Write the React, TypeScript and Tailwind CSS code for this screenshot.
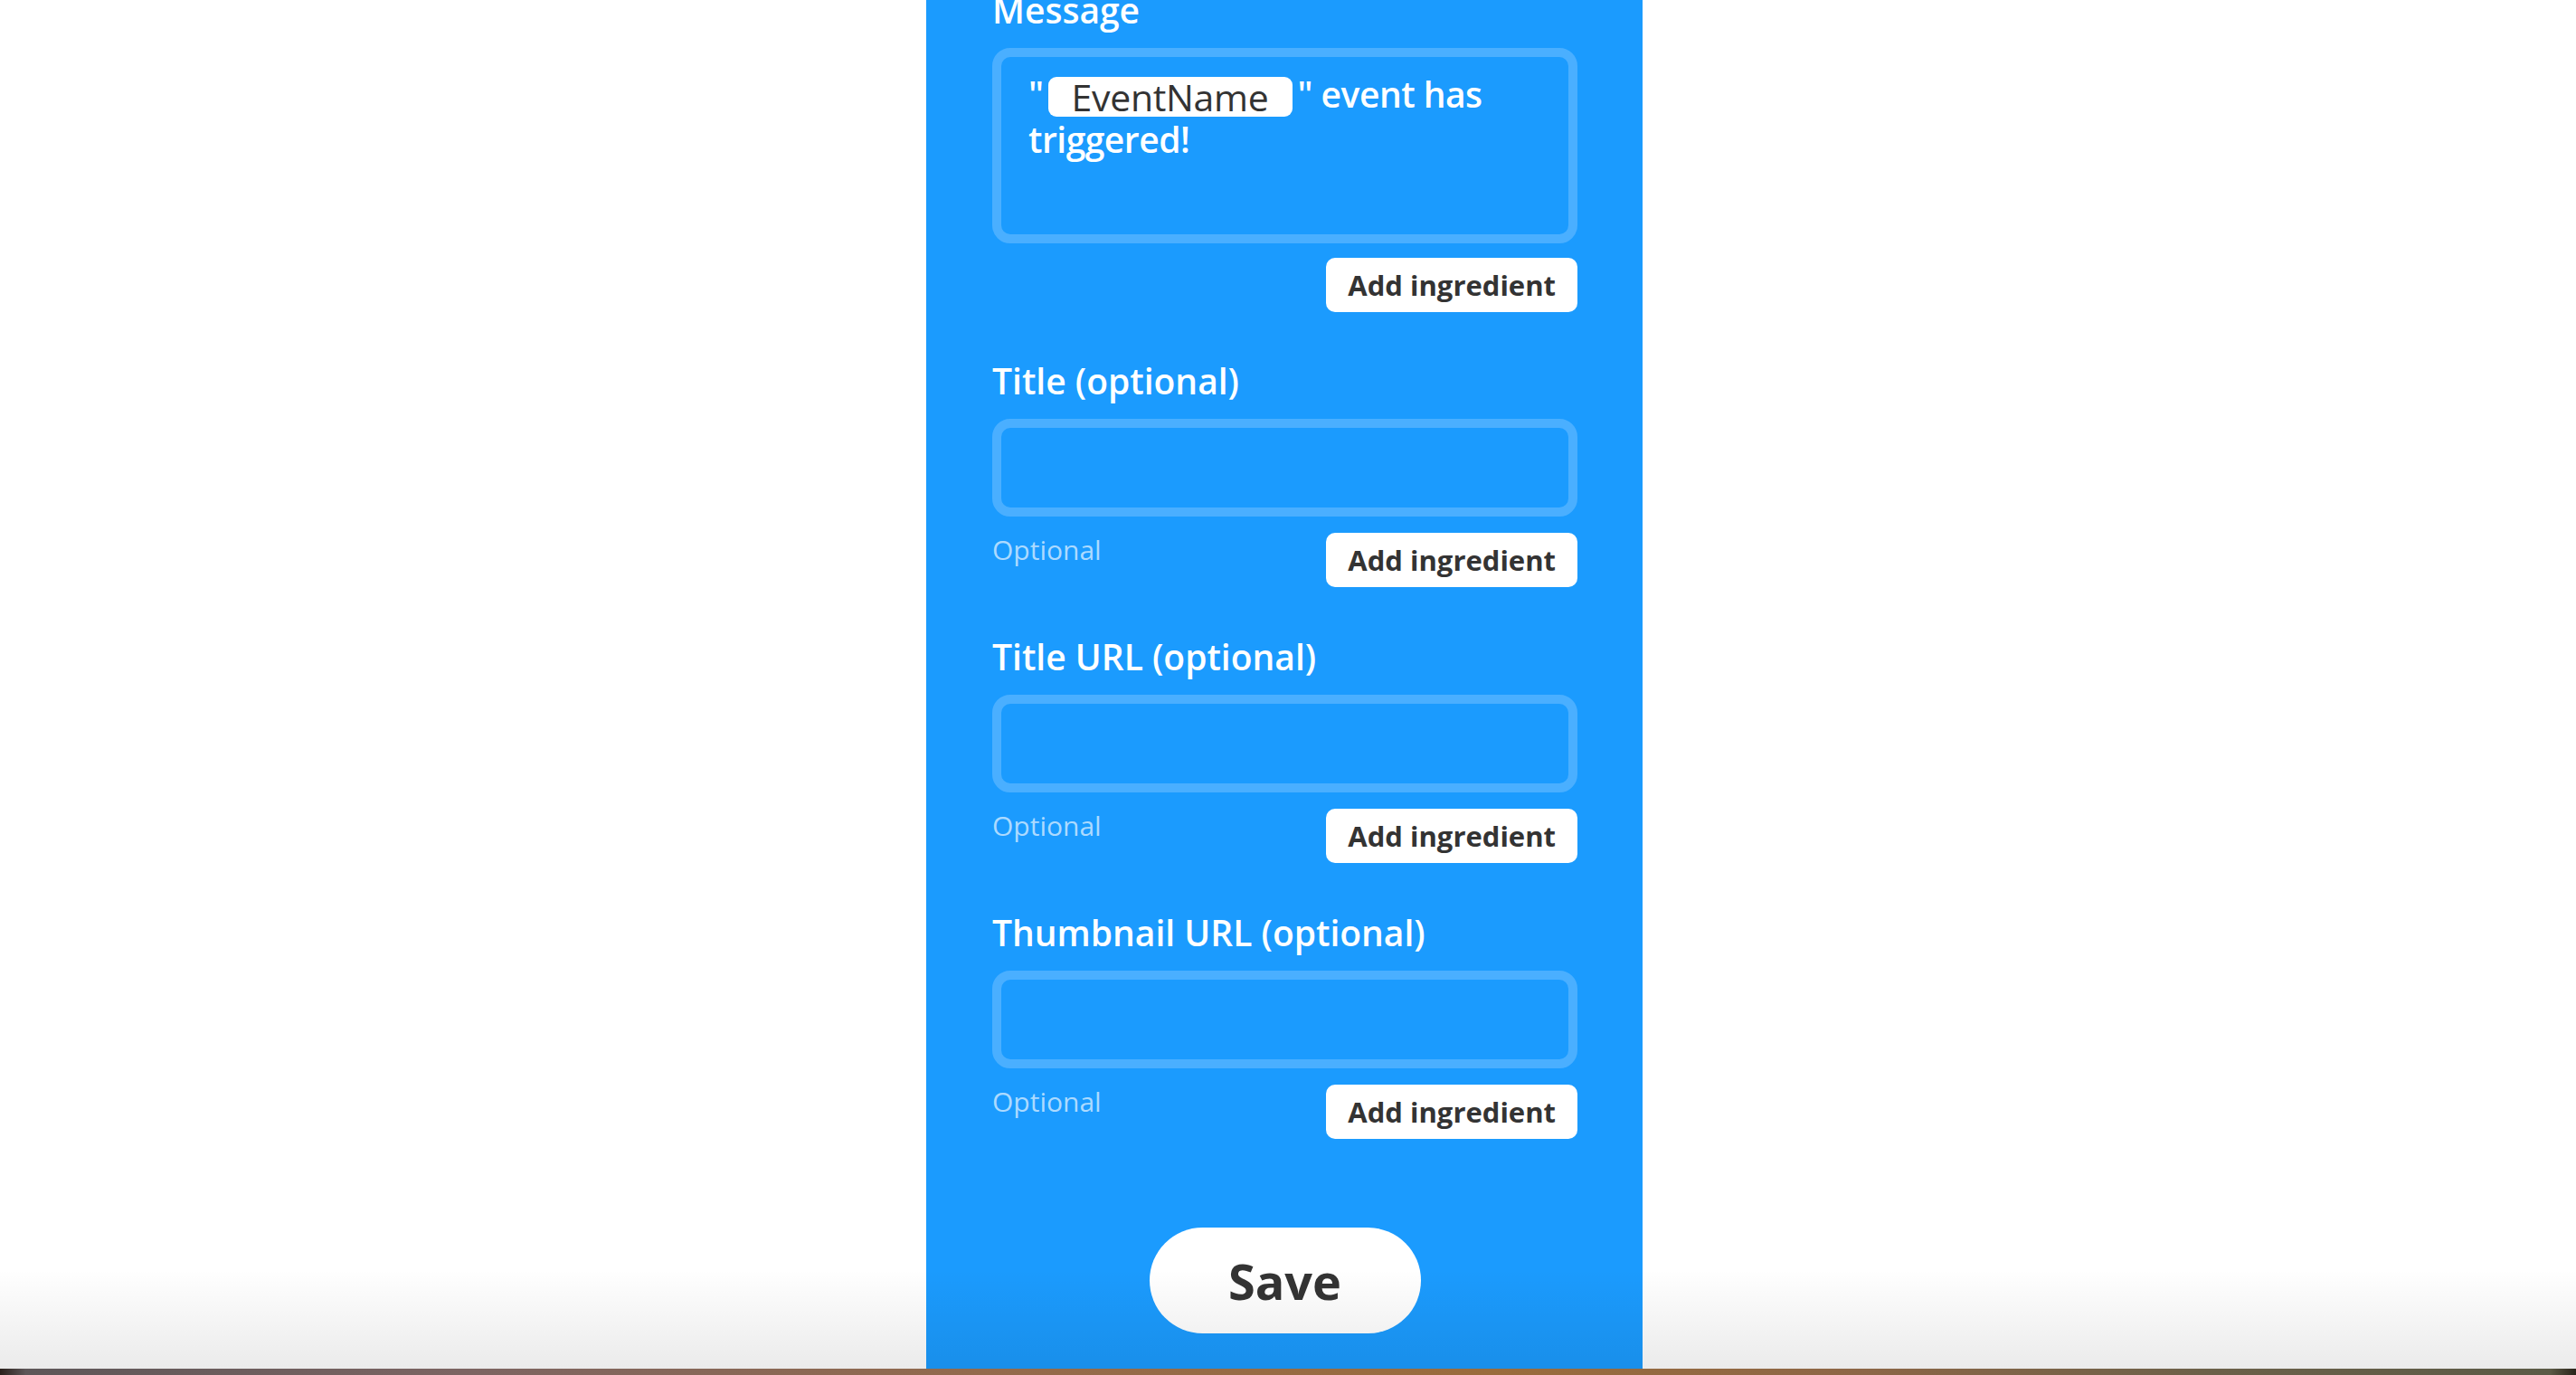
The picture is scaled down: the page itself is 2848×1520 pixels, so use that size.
import React from "react";

const font = { fontFamily: "'Open Sans', Lato, sans-serif" };

function AddIngredient() {
  return (
    <button className="h-[60px] px-6 bg-white rounded-[10px] text-[#333] text-[31px] font-bold leading-none shrink-0">
      Add ingredient
    </button>
  );
}

function Field({ label }: { label: string }) {
  return (
    <div className="mt-[55px]">
      <div className="text-white text-[39px] leading-[44px] font-semibold">{label}</div>
      {/* empty text input */}
      <div className="mt-5 h-[108px] rounded-[20px] border-[10px] border-[#4aafff]" />
      <div className="mt-[18px] flex items-start justify-between">
        <span className="text-[#acdaff] text-[30px] leading-[37px]">Optional</span>
        <AddIngredient />
      </div>
    </div>
  );
}

export default function App() {
  return (
    <div className="w-[2848px] h-[1520px] flex flex-col overflow-hidden bg-white" style={font}>
      <main className="relative flex-1 flex justify-center overflow-hidden">
        {/* Blue action panel */}
        <section className="w-[792px] mr-2 bg-[#1b9bfe] pl-[73px] pr-[72px] flex flex-col">
          {/* Message */}
          <div className="-mt-[11px] text-white text-[39px] leading-[44px] font-semibold">Message</div>
          <div className="mt-5 h-[216px] rounded-[20px] border-[10px] border-[#4aafff] pl-[30px] pr-6 pt-4">
            <p className="text-white text-[39px] leading-[50px] font-semibold tracking-[-0.5px]">
              "
              <span className="inline-block align-[-4px] mx-[5px] h-[44px] leading-[44px] bg-white rounded-[9px] pl-[26px] pr-[27px] text-[#333] text-[41px] font-medium tracking-[-0.3px]">
                EventName
              </span>
              " event has triggered!
            </p>
          </div>
          <div className="mt-4 flex justify-end">
            <AddIngredient />
          </div>

          <div className="-mt-px">
            <Field label="Title (optional)" />
          </div>
          <Field label="Title URL (optional)" />
          <Field label="Thumbnail URL (optional)" />

          <div className="mt-[98px] flex justify-center">
            <button className="w-[300px] h-[117px] rounded-full bg-white text-[#333] text-[54px] font-bold leading-none">
              Save
            </button>
          </div>
        </section>

        {/* dock shadow fading over the bottom of the page */}
        <div className="pointer-events-none absolute inset-x-0 bottom-0 h-[110px] bg-gradient-to-b from-transparent to-black/[0.08]" />
      </main>

      {/* desktop strip under the window */}
      <div className="h-[7px] bg-[linear-gradient(90deg,#2a201b_0%,#5d5658_1%,#7c6462_18%,#936a4c_38%,#9a6c3c_58%,#8d6646_72%,#6b6049_86%,#5b5a46_99%,#2a241a_100%)]" />
    </div>
  );
}
